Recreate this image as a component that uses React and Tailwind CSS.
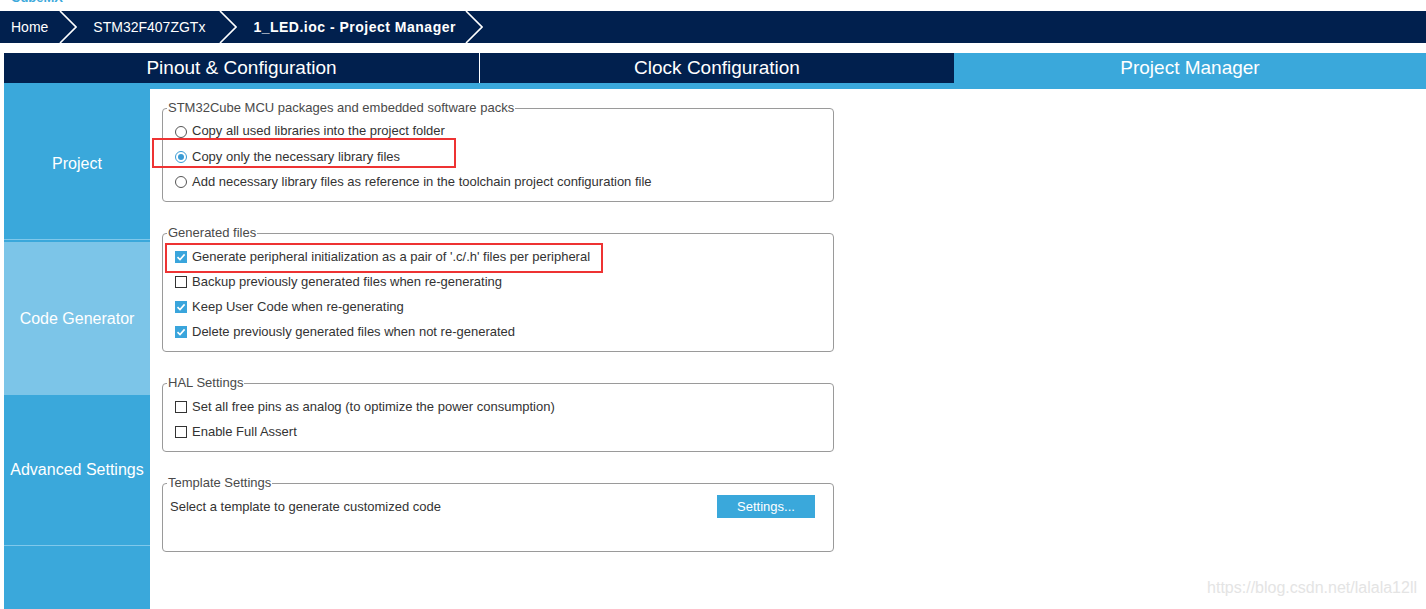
import React from 'react'

const NAVY = 'bg-[#01204e]'

const Chevron = () => (
  <svg width="18" height="32" viewBox="0 0 18 32" className="shrink-0">
    <path d="M1 0 L17 16 L1 32" stroke="#ffffff" strokeWidth="1.6" fill="none" />
  </svg>
)

const Radio = ({ on }) => (
  <span
    className={`w-[12px] h-[12px] rounded-full border bg-white shrink-0 flex items-center justify-center ${
      on ? 'border-[#3a9bd5]' : 'border-[#555]'
    }`}
  >
    {on && <span className="w-[6px] h-[6px] rounded-full bg-[#3a9bd5]" />}
  </span>
)

const Check = ({ on }) =>
  on ? (
    <span className="w-[12px] h-[12px] bg-[#3aa5dc] shrink-0 flex items-center justify-center">
      <svg width="10" height="10" viewBox="0 0 10 10">
        <path d="M1.5 5.2 L4 7.6 L8.6 2.4" stroke="#ffffff" strokeWidth="1.6" fill="none" />
      </svg>
    </span>
  ) : (
    <span className="w-[12px] h-[12px] border border-[#333] bg-white shrink-0" />
  )

const Row = ({ children }) => (
  <div className="relative h-[25px] flex items-center gap-[5px] text-[13px] text-[#333]">{children}</div>
)

const Group = ({ title, children, pb = 'pb-[7px]', pl = 'pl-[12px]' }) => (
  <fieldset className={`w-[672px] border border-[#9a9a9a] rounded-[4px] ${pb}`}>
    <legend className="ml-[4px] px-[1px] text-[13px] leading-[14px] text-[#4a4a4a]">{title}</legend>
    <div className={`pt-[4px] ${pl} pr-[12px]`}>{children}</div>
  </fieldset>
)

const RedBox = ({ className }) => (
  <span className={`absolute border-2 border-[#ee3333] pointer-events-none ${className}`} />
)

export default function App() {
  return (
    <div className="relative w-[1426px] h-[609px] overflow-hidden bg-white font-['Liberation_Sans',Arial,sans-serif] flex flex-col">
      {/* clipped app title */}
      <div className="h-[11px] overflow-hidden pl-[11px]">
        <div className="-mt-[9px] text-[13px] leading-[14px] font-bold text-[#3ca9db]">CubeMX</div>
      </div>

      {/* breadcrumb */}
      <div className={`h-[32px] ${NAVY} flex items-center text-white text-[14px]`}>
        <span className="ml-[11px]">Home</span>
        <span className="ml-[11px]"><Chevron /></span>
        <span className="ml-[16px]">STM32F407ZGTx</span>
        <span className="ml-[14px]"><Chevron /></span>
        <span className="ml-[16px] font-bold tracking-[0.5px]">1_LED.ioc - Project Manager</span>
        <span className="ml-[9px]"><Chevron /></span>
      </div>

      {/* tabs */}
      <div className="mt-[10px] ml-[4px] flex h-[30px] text-white text-[19px]">
        <div className={`w-[475px] ${NAVY} flex items-center justify-center`}>Pinout &amp; Configuration</div>
        <div className="w-[1px] bg-white" />
        <div className={`w-[474px] ${NAVY} flex items-center justify-center`}>Clock Configuration</div>
        <div className="flex-1 bg-[#3aa8db] flex items-center justify-center">Project Manager</div>
      </div>
      <div className="ml-[4px] h-[6px] bg-[#3aa8db]" />

      <div className="flex flex-1 min-h-0">
        {/* sidebar */}
        <div className="ml-[4px] w-[146px] flex flex-col bg-[#3aa8db] text-white text-[16px]">
          <div className="h-[150px] flex items-center justify-center">Project</div>
          <div className="h-[1px] bg-[#80c8eb]" />
          <div className="h-[155px] border-t-2 border-[#3aa8db] bg-[#7cc5e8] flex items-center justify-center">
            Code Generator
          </div>
          <div className="h-[151px] border-b border-[#80c8eb] flex items-center justify-center">Advanced Settings</div>
          <div className="flex-1" />
        </div>

        {/* content */}
        <div className="flex-1 pl-[12px] pt-[12px] flex flex-col gap-[24px]">
          <Group title="STM32Cube MCU packages and embedded software packs">
            <Row>
              <Radio />
              <span className="leading-[14px] border-b border-dotted border-[#333]">
                Copy all used libraries into the project folder
              </span>
            </Row>
            <Row>
              <RedBox className="-left-[23px] top-[-6px] w-[304px] h-[30px]" />
              <Radio on />
              <span>Copy only the necessary library files</span>
            </Row>
            <Row>
              <Radio />
              <span>Add necessary library files as reference in the toolchain project configuration file</span>
            </Row>
          </Group>

          <Group title="Generated files">
            <Row>
              <RedBox className="-left-[10px] top-[-1px] w-[438px] h-[30px]" />
              <Check on />
              <span>Generate peripheral initialization as a pair of '.c/.h' files per peripheral</span>
            </Row>
            <Row>
              <Check />
              <span>Backup previously generated files when re-generating</span>
            </Row>
            <Row>
              <Check on />
              <span>Keep User Code when re-generating</span>
            </Row>
            <Row>
              <Check on />
              <span>Delete previously generated files when not re-generated</span>
            </Row>
          </Group>

          <Group title="HAL Settings">
            <Row>
              <Check />
              <span>Set all free pins as analog (to optimize the power consumption)</span>
            </Row>
            <Row>
              <Check />
              <span>Enable Full Assert</span>
            </Row>
          </Group>

          <Group title="Template Settings" pb="pb-[32px]" pl="pl-[7px]">
            <Row>
              <span className="flex-1">Select a template to generate customized code</span>
              <span className="mr-[6px] w-[98px] h-[23px] bg-[#3aa8db] text-white flex items-center justify-center">
                Settings...
              </span>
            </Row>
          </Group>
        </div>
      </div>

      {/* watermark */}
      <div className="absolute right-[9px] bottom-[9px] text-[16px] text-[#e4e4e4]">https://blog.csdn.net/lalala12ll</div>
    </div>
  )
}
